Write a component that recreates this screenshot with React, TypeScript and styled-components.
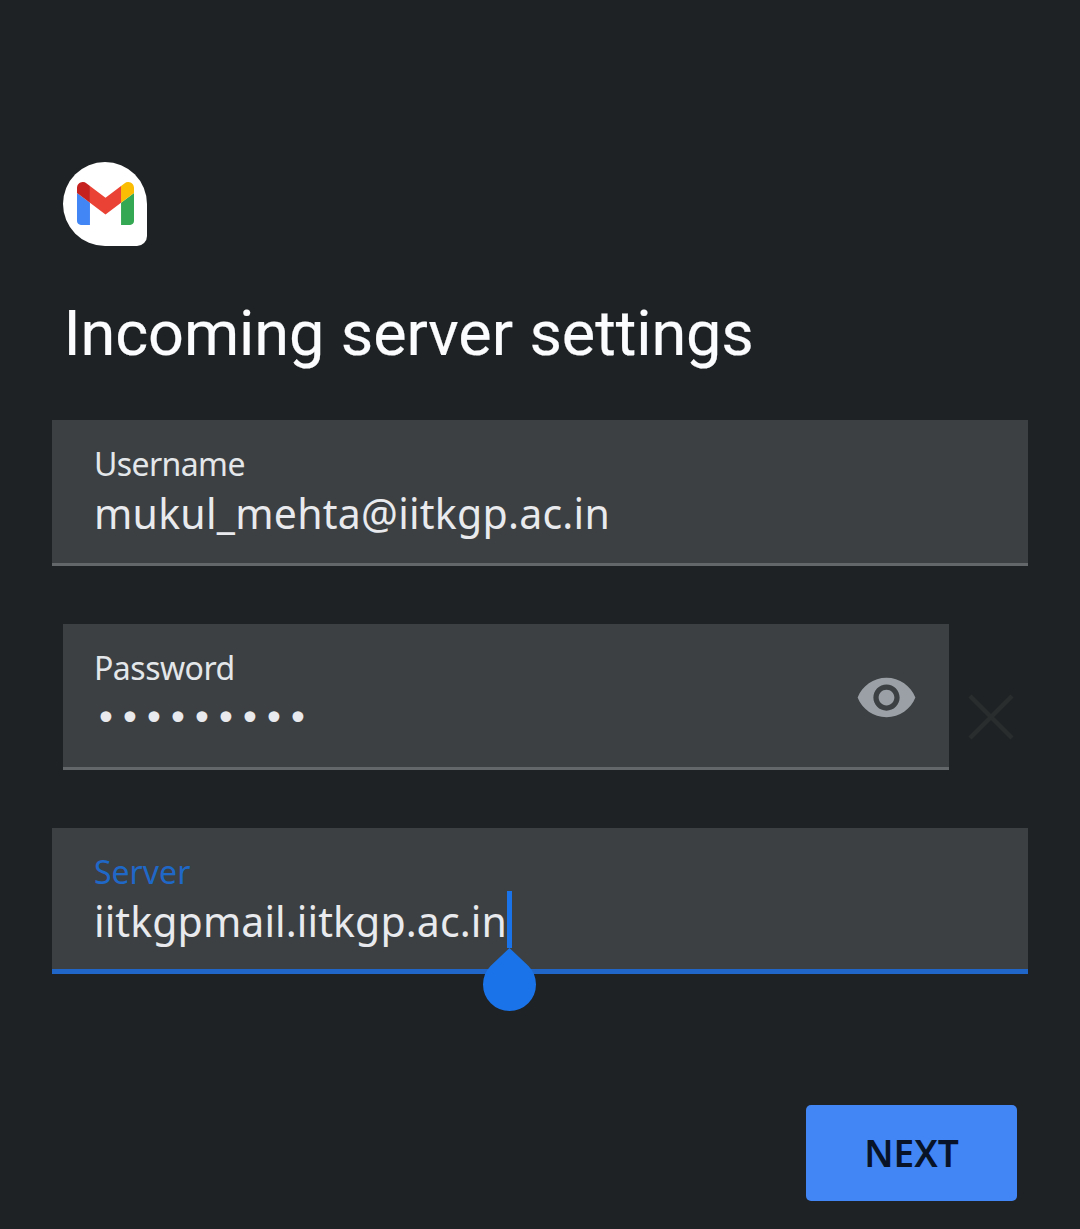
import React from "react";
import styled, { createGlobalStyle } from "styled-components";

const GlobalStyle = createGlobalStyle`
  *, *::before, *::after { box-sizing: border-box; }
  html, body { margin: 0; background: #1f2224; }
`;

const Screen = styled.main`
  display: flex;
  flex-direction: column;
  width: 1080px;
  height: 1229px;
  padding: 162px 52px 0;
  overflow: hidden;
  background: #1f2224;
  font-family: "Noto Sans", "Open Sans", sans-serif;
`;

const Badge = styled.div`
  display: flex;
  flex: none;
  align-items: center;
  justify-content: center;
  width: 84px;
  height: 84px;
  margin-left: 11px;
  padding-bottom: 1px;
  border-radius: 42px 42px 10px 42px;
  background: #fff;
`;

const Title = styled.h1`
  margin: 51px 0 0 11.5px;
  height: 123px;
  font: 400 63px/74px Roboto, sans-serif;
  letter-spacing: -0.1px;
  word-spacing: 1px;
  white-space: nowrap;
  color: #fbfcfd;
  -webkit-text-stroke: 0.2px #fbfcfd;
`;

const Form = styled.form`
  display: flex;
  flex-direction: column;
  gap: 58px;
`;

const PasswordRow = styled.div`
  display: flex;
  align-items: center;
  padding-left: 11px;
`;

const Field = styled.div<{ $active?: boolean; $inset?: number; $width?: number }>`
  display: flex;
  flex: none;
  justify-content: space-between;
  width: ${(p) => (p.$width ? `${p.$width}px` : "100%")};
  height: 146px;
  padding: 26px 31px 0 ${(p) => p.$inset ?? 42}px;
  background: #3c4042;
  border-bottom: ${(p) => (p.$active ? "5px solid #1f66c8" : "3px solid #63676a")};
`;

const FieldText = styled.div`
  display: flex;
  flex-direction: column;
`;

const Label = styled.label<{ $active?: boolean; $spacing: number }>`
  height: 36px;
  font-size: 32px;
  line-height: 36px;
  letter-spacing: ${(p) => p.$spacing}px;
  color: ${(p) => (p.$active ? "#2068c8" : "#e4e7ea")};
`;

const Value = styled.div<{ $spacing: number }>`
  display: flex;
  height: 62px;
  font-size: 41px;
  line-height: 62px;
  letter-spacing: ${(p) => p.$spacing}px;
  white-space: nowrap;
  color: #e8eaed;
`;

const Mask = styled.div`
  height: 62px;
  padding-left: 1px;
  font-family: "DejaVu Sans", sans-serif;
  font-size: 37px;
  line-height: 66px;
  letter-spacing: 2.17px;
  color: #e8eaed;
`;

const EyeButton = styled.span`
  display: flex;
  align-self: flex-start;
  margin-top: 16px;
  color: #9aa0a6;
`;

const ClearButton = styled.span`
  display: flex;
  margin: 40px 0 0 19px;
`;

const Caret = styled.span`
  position: relative;
  width: 5px;
  height: 57px;
  margin-top: 1px;
  background: #1a73e8;
`;

const Handle = styled.svg`
  position: absolute;
  top: 57px;
  left: -24px;
`;

const NextButton = styled.button`
  flex: none;
  align-self: flex-end;
  width: 211px;
  height: 96px;
  margin: 131px 11px 0 0;
  padding: 0;
  border: 0;
  border-radius: 5px;
  background: #4285f4;
  color: #081327;
  font: 600 37px/48px "Noto Sans", sans-serif;
`;

function GmailLogo() {
  return (
    <svg width="57" height="43" viewBox="52 42 88 66" preserveAspectRatio="none">
      <path fill="#4285f4" d="M58 108h14V74L52 59v43c0 3.32 2.69 6 6 6" />
      <path fill="#34a853" d="M120 108h14c3.32 0 6-2.69 6-6V59l-20 15" />
      <path fill="#fbbc04" d="M120 48v26l20-15v-8c0-7.42-8.47-11.65-14.4-7.2" />
      <path fill="#ea4335" d="M72 74V48l24 18 24-18v26L96 92" />
      <path fill="#c5221f" d="M52 51v8l20 15V48l-5.6-4.2c-5.94-4.45-14.4-.22-14.4 7.2" />
    </svg>
  );
}

export default function App() {
  return (
    <>
      <GlobalStyle />
      <Screen>
        <Badge>
          <GmailLogo />
        </Badge>
        <Title>Incoming server settings</Title>
        <Form>
          <Field>
            <FieldText>
              <Label $spacing={-0.6}>Username</Label>
              <Value $spacing={0.25}>mukul_mehta@iitkgp.ac.in</Value>
            </FieldText>
          </Field>
          <PasswordRow>
            <Field $inset={31} $width={886}>
              <FieldText>
                <Label $spacing={-0.5}>Password</Label>
                <Mask>•••••••••</Mask>
              </FieldText>
              <EyeButton>
                <svg width="63" height="63" viewBox="0 0 24 24" fill="currentColor">
                  <path d="M12 4.5C7 4.5 2.73 7.61 1 12c1.73 4.39 6 7.5 11 7.5s9.27-3.11 11-7.5c-1.73-4.39-6-7.5-11-7.5zM12 17c-2.76 0-5-2.24-5-5s2.24-5 5-5 5 2.24 5 5-2.24 5-5 5zm0-8c-1.66 0-3 1.34-3 3s1.34 3 3 3 3-1.34 3-3-1.34-3-3-3z" />
                </svg>
              </EyeButton>
            </Field>
            <ClearButton>
              <svg width="46" height="46" viewBox="0 0 46 46" fill="none" stroke="#2a2d2e" strokeWidth="4.5">
                <path d="M2 2l42 42M44 2L2 44" />
              </svg>
            </ClearButton>
          </PasswordRow>
          <Field $active>
            <FieldText>
              <Label $active $spacing={0}>Server</Label>
              <Value $spacing={0.1}>
                iitkgpmail.iitkgp.ac.in
                <Caret>
                  <Handle width="53" height="63" viewBox="0 0 53 63">
                    <path fill="#1a73e8" d="M26.5 0L45.24 17.76A26.5 26.5 0 1 1 7.76 17.76Z" />
                  </Handle>
                </Caret>
              </Value>
            </FieldText>
          </Field>
        </Form>
        <NextButton>NEXT</NextButton>
      </Screen>
    </>
  );
}
